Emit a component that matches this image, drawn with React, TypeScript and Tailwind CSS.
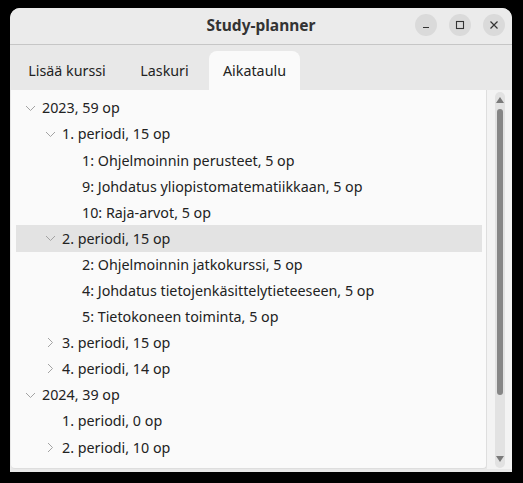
import React from 'react';

type Row = {
  label: string;
  level: number;
  arrow?: 'down' | 'right';
  selected?: boolean;
};

const rows: Row[] = [
  { label: '2023, 59 op', level: 0, arrow: 'down' },
  { label: '1. periodi, 15 op', level: 1, arrow: 'down' },
  { label: '1: Ohjelmoinnin perusteet, 5 op', level: 2 },
  { label: '9: Johdatus yliopistomatematiikkaan, 5 op', level: 2 },
  { label: '10: Raja-arvot, 5 op', level: 2 },
  { label: '2. periodi, 15 op', level: 1, arrow: 'down', selected: true },
  { label: '2: Ohjelmoinnin jatkokurssi, 5 op', level: 2 },
  { label: '4: Johdatus tietojenkäsittelytieteeseen, 5 op', level: 2 },
  { label: '5: Tietokoneen toiminta, 5 op', level: 2 },
  { label: '3. periodi, 15 op', level: 1, arrow: 'right' },
  { label: '4. periodi, 14 op', level: 1, arrow: 'right' },
  { label: '2024, 39 op', level: 0, arrow: 'down' },
  { label: '1. periodi, 0 op', level: 1 },
  { label: '2. periodi, 10 op', level: 1, arrow: 'right' },
];

const indent = ['pl-[8px]', 'pl-[28px]', 'pl-[48px]'];

// expander arrow, left-aligned in an 18px slot
const Chevron = ({ dir }: { dir?: 'down' | 'right' }) => {
  if (!dir) return <span className="w-[18px] shrink-0" />;
  return (
    <span className="flex w-[18px] shrink-0 items-center">
      {dir === 'down' ? (
        <svg width="11" height="7" viewBox="0 0 11 7" fill="none" className="ml-[1px]">
          <path d="M1 1 L5.5 5.5 L10 1" stroke="#a3a3a3" strokeWidth="1" />
        </svg>
      ) : (
        <svg width="7" height="11" viewBox="0 0 7 11" fill="none" className="ml-[3px]">
          <path d="M1 1 L5.5 5.5 L1 10" stroke="#a3a3a3" strokeWidth="1" />
        </svg>
      )}
    </span>
  );
};

export default function App() {
  return (
    <div className="h-[483px] w-[523px] bg-black pl-[10px] pt-[8px] font-['Noto_Sans',sans-serif] text-[#222]">
      <div className="flex h-[464px] w-[502px] flex-col overflow-hidden rounded-t-[10px] bg-[#e8e8e8]">
        {/* Title bar */}
        <div className="relative flex h-[37px] items-center justify-center border-b border-[#c6c6c6] bg-[#ebebeb]">
          <span className="text-[15.5px] font-bold text-[#333]">Study-planner</span>
          <div className="absolute right-[7px] top-[6px] flex gap-[12px]">
            <button className="flex h-[22px] w-[22px] items-center justify-center rounded-full bg-[#dadada]">
              <svg width="10" height="10" viewBox="0 0 10 10">
                <path d="M2 7.5 H8" stroke="#333" strokeWidth="1.2" />
              </svg>
            </button>
            <button className="flex h-[22px] w-[22px] items-center justify-center rounded-full bg-[#dadada]">
              <svg width="10" height="10" viewBox="0 0 10 10">
                <rect x="1.5" y="1.5" width="7" height="7" fill="none" stroke="#333" strokeWidth="1.1" />
              </svg>
            </button>
            <button className="flex h-[22px] w-[22px] items-center justify-center rounded-full bg-[#dadada]">
              <svg width="10" height="10" viewBox="0 0 10 10">
                <path d="M1.5 1.5 L8.5 8.5 M8.5 1.5 L1.5 8.5" stroke="#333" strokeWidth="1.2" />
              </svg>
            </button>
          </div>
        </div>

        {/* Tabs */}
        <div className="flex h-[45px] items-end gap-[6px] pl-[4px] text-[14.3px]">
          <div className="flex h-[39px] w-[106px] items-center justify-center">Lisää kurssi</div>
          <div className="flex h-[39px] w-[77px] items-center justify-center">Laskuri</div>
          <div className="flex h-[39px] w-[91px] items-center justify-center rounded-t-[8px] bg-[#fafafa]">
            Aikataulu
          </div>
        </div>

        {/* Content */}
        <div className="flex flex-1 pb-[3px] pl-[1px]">
          <div className="flex-1 rounded-b-[4px] border-r border-b border-[#dedede] bg-[#fafafa] pt-[5px] pr-[4px]">
            {rows.map((r, i) => (
              <div
                key={i}
                className={`ml-[5px] flex h-[26.1px] items-center text-[14.3px] ${indent[r.level]} ${
                  r.selected ? 'bg-[#e3e3e3]' : ''
                }`}
              >
                <Chevron dir={r.arrow} />
                <span>{r.label}</span>
              </div>
            ))}
          </div>
          <div className="flex w-[25px] justify-center bg-[#f3f3f3] pt-[2px]">
            <div className="flex h-[376px] w-[10px] flex-col items-center rounded-full bg-[#e2e2e2]">
              <svg width="8" height="6" viewBox="0 0 8 6" className="mt-[5px]">
                <path d="M4 0 L8 6 L0 6 Z" fill="#7a7a7a" />
              </svg>
              <div className="mt-[6px] h-[286px] w-[6px] rounded-full bg-[#868686]" />
              <div className="flex-1" />
              <svg width="8" height="6" viewBox="0 0 8 6" className="mb-[6px]">
                <path d="M0 0 L8 0 L4 6 Z" fill="#7a7a7a" />
              </svg>
            </div>
          </div>
        </div>
      </div>
    </div>
  );
}
